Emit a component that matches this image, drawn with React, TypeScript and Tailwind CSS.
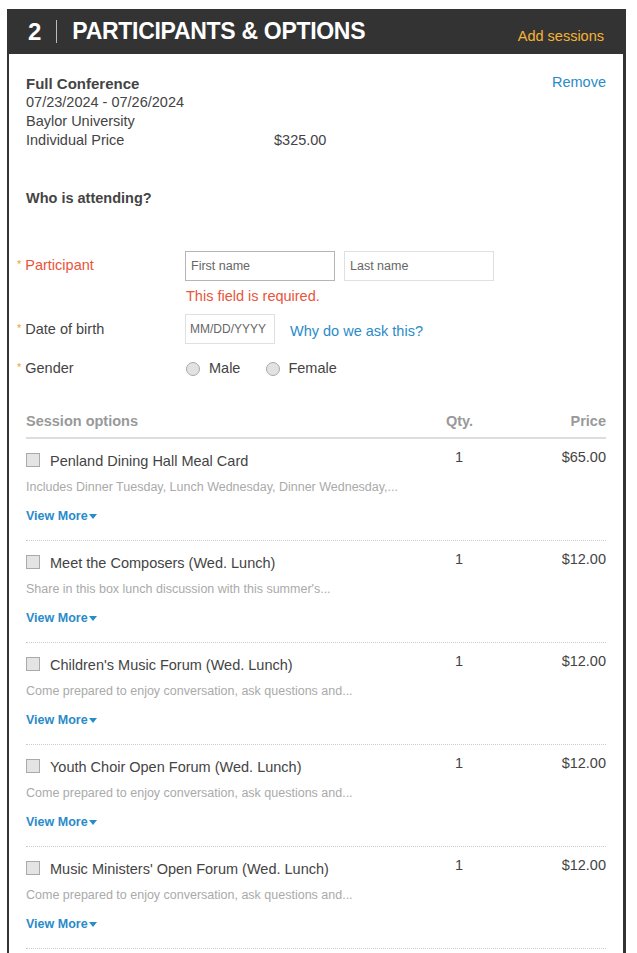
import React from "react";

const SESSIONS = [
  {
    title: "Penland Dining Hall Meal Card",
    desc: "Includes Dinner Tuesday, Lunch Wednesday, Dinner Wednesday,...",
    qty: 1,
    price: "$65.00",
  },
  {
    title: "Meet the Composers (Wed. Lunch)",
    desc: "Share in this box lunch discussion with this summer's...",
    qty: 1,
    price: "$12.00",
  },
  {
    title: "Children's Music Forum (Wed. Lunch)",
    desc: "Come prepared to enjoy conversation, ask questions and...",
    qty: 1,
    price: "$12.00",
  },
  {
    title: "Youth Choir Open Forum (Wed. Lunch)",
    desc: "Come prepared to enjoy conversation, ask questions and...",
    qty: 1,
    price: "$12.00",
  },
  {
    title: "Music Ministers' Open Forum (Wed. Lunch)",
    desc: "Come prepared to enjoy conversation, ask questions and...",
    qty: 1,
    price: "$12.00",
  },
];

// asterisk hangs in the left gutter, label text lines up with the rest
function Req() {
  return <span className="text-[#f0a32e] text-[11px] -ml-[9px] mr-[4px] relative -top-[2px]">*</span>;
}

export default function App() {
  return (
    <div className="min-h-screen bg-white pt-[9px] pl-[7px] pr-[11px] font-['Liberation_Sans',Arial,sans-serif] text-[#444]">
      {/* header bar */}
      <div className="h-[45px] bg-[#333] flex items-center pl-[21px] pr-[22px]">
        <span className="text-white font-bold text-[24px] leading-none">2</span>
        <span className="w-px h-[23px] bg-[#bbb] ml-[15px] mr-[15px]" />
        <span className="text-white font-bold text-[23px] leading-none tracking-[-0.3px]">PARTICIPANTS &amp; OPTIONS</span>
        <span className="ml-auto text-[#f5b335] text-[14.5px] mt-[10px]">Add sessions</span>
      </div>

      <div className="border-l-2 border-r-[3px] border-[#333] pl-[17px] pr-[17px] pt-[20px] pb-[20px]">
        {/* conference summary */}
        <div className="flex justify-between text-[14.5px] leading-[19px]">
          <div>
            <div className="font-bold text-[15px]">Full Conference</div>
            <div>07/23/2024 - 07/26/2024</div>
            <div>Baylor University</div>
            <div className="flex">
              <span className="w-[248px]">Individual Price</span>
              <span>$325.00</span>
            </div>
          </div>
          <a className="text-[#2a8bc9] text-[14.5px] -mt-[1px]">Remove</a>
        </div>

        <div className="mt-[39px] font-bold text-[14.5px] leading-[19px]">Who is attending?</div>

        {/* participant */}
        <div className="mt-[43px] flex items-center">
          <div className="w-[159px] text-[14.5px] text-[#e8553a]">
            <Req />Participant
          </div>
          <input
            placeholder="First name"
            className="w-[150px] h-[30px] border border-[#b5b5b5] px-[5px] text-[12.5px] placeholder:text-[#666] outline-none"
          />
          <input
            placeholder="Last name"
            className="ml-[9px] w-[150px] h-[30px] border border-[#e0e0e0] px-[5px] text-[12.5px] placeholder:text-[#666] outline-none"
          />
        </div>
        <div className="ml-[160px] mt-[7px] text-[14.5px] leading-[16px] text-[#e8553a]">This field is required.</div>

        <div className="mt-[10px] flex items-center">
          <div className="w-[159px] text-[14.5px] mt-[1px]">
            <Req />Date of birth
          </div>
          <input
            placeholder="MM/DD/YYYY"
            className="w-[90px] h-[30px] border border-[#e0e0e0] px-[4px] text-[12px] placeholder:text-[#666] outline-none"
          />
          <a className="ml-[15px] mt-[5px] text-[14.5px] text-[#2a8bc9]">Why do we ask this?</a>
        </div>

        <div className="mt-[15px] h-[20px] flex items-center text-[14.5px]">
          <div className="w-[160px]">
            <Req />Gender
          </div>
          <span className="w-[14px] h-[14px] rounded-full border border-[#aaa] bg-[#e2e2e2]" />
          <span className="ml-[9px]">Male</span>
          <span className="ml-[26px] w-[14px] h-[14px] rounded-full border border-[#aaa] bg-[#e2e2e2]" />
          <span className="ml-[8px]">Female</span>
        </div>

        {/* session options */}
        <div className="mt-[34px] flex text-[14.5px] leading-[17px] font-bold text-[#999] pb-[7px] border-b-2 border-[#ddd]">
          <span className="flex-1">Session options</span>
          <span className="w-[26px] text-center">Qty.</span>
          <span className="w-[134px] text-right">Price</span>
        </div>

        {SESSIONS.map((s) => (
          <div key={s.title} className="pt-[11.5px] pb-[16.5px] border-b border-dotted border-[#ccc]">
            <div className="flex items-center text-[14.5px] leading-[19px]">
              <span className="w-[14px] h-[14px] border border-[#aaa] bg-[#e4e4e4]" />
              <span className="ml-[10px] flex-1 relative top-[1px]">{s.title}</span>
              <span className="w-[26px] text-center -mt-[6px]">{s.qty}</span>
              <span className="w-[134px] text-right -mt-[6px]">{s.price}</span>
            </div>
            <div className="mt-[9px] text-[12.5px] leading-[17px] text-[#aaa]">{s.desc}</div>
            <div className="mt-[12px] text-[12.5px] leading-[16px] font-bold text-[#2a8bc9] flex items-center">
              View More
              <svg width="8" height="5" viewBox="0 0 8 5" className="ml-[1px] mt-[1px]">
                <path d="M0 0 L8 0 L4 5 Z" fill="#2a8bc9" />
              </svg>
            </div>
          </div>
        ))}
      </div>
    </div>
  );
}
